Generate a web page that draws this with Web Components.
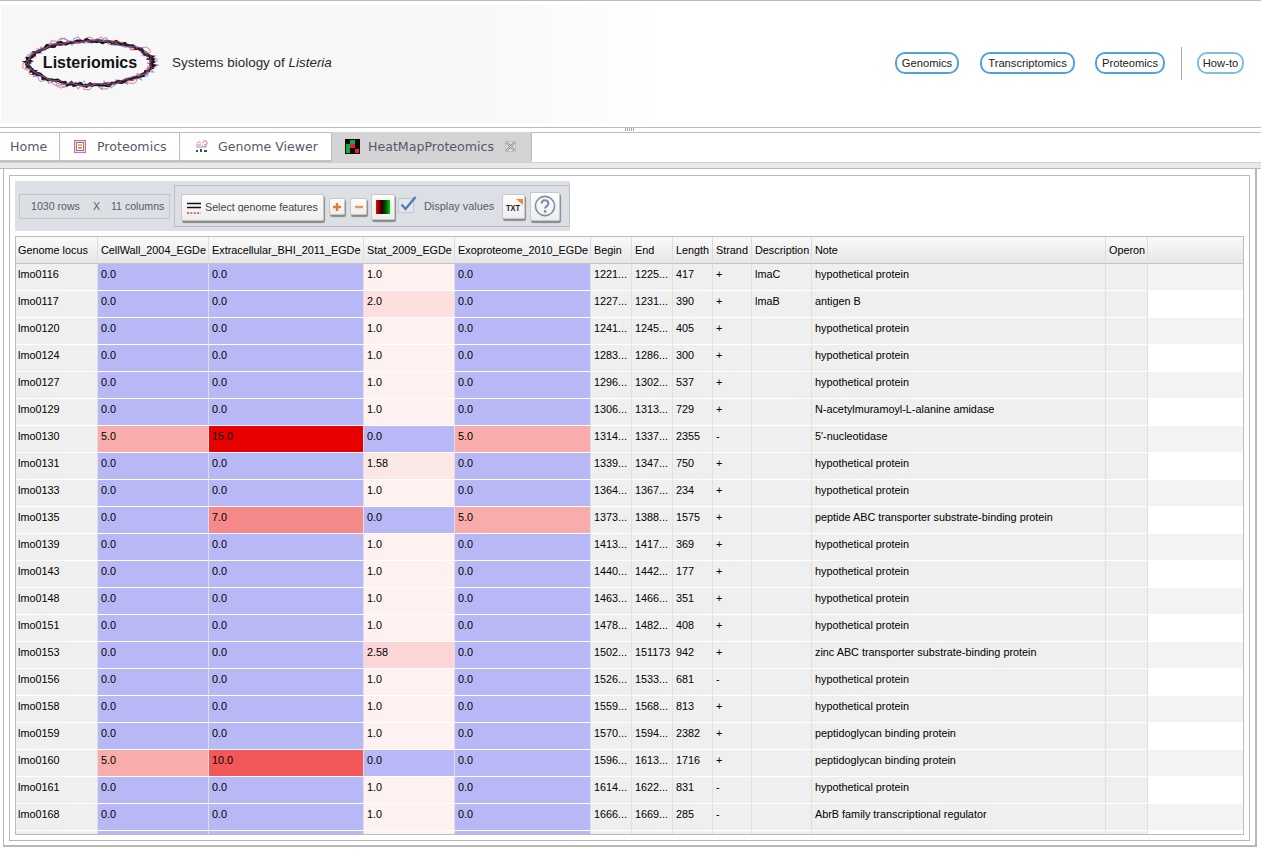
<!DOCTYPE html>
<html>
<head>
<meta charset="utf-8">
<title>Listeriomics</title>
<style>
  html, body { margin: 0; height: 851px; overflow: hidden; background: #fff; }
  body { font-family: "Liberation Sans", Arial, sans-serif; }
</style>
</head>
<body>
<listeria-app></listeria-app>

<script>
// ring of the logo, jittered lines so it looks hand drawn
function ringPath(cx, cy, rx, ry, jitter, step, seed) {
  let s = seed;
  const rnd = () => {
    s = (s * 16807) % 2147483647;
    return s / 2147483647 - 0.5;
  };
  let d = "";
  for (let a = 0; a <= 360; a += step) {
    const t = a * Math.PI / 180;
    const j = rnd() * jitter;
    const x = cx + (rx + j) * Math.cos(t);
    const y = cy + (ry + j * 0.8) * Math.sin(t);
    d += (a === 0 ? "M" : "L") + x.toFixed(1) + " " + y.toFixed(1);
  }
  return d;
}

class ListeriaLogo extends HTMLElement {
  constructor() {
    super();
    this.attachShadow({ mode: "open" });
    this.shadowRoot.innerHTML = `
    <style>
      :host { display: grid; width: 146px; height: 60px; place-items: center; }
      svg, span { grid-area: 1 / 1; }
      svg { overflow: visible; }
      span { font: bold 16px "Liberation Sans", Arial, sans-serif; color: #111; padding-bottom: 1px; }
    </style>
    <svg width="146" height="60" viewBox="0 0 146 60" fill="none">
      <path d="${ringPath(73, 30, 63, 22.5, 11, 4, 91)}" stroke="#8b9ad6" stroke-width="1.1" opacity=".85"/>
      <path d="${ringPath(73, 30, 63, 23, 12, 5, 417)}" stroke="#ef5a68" stroke-width="1" opacity=".8"/>
      <path d="${ringPath(73, 30, 62, 22, 5, 3, 1203)}" stroke="#15151d" stroke-width="2.4"/>
      <path d="${ringPath(73, 30, 62, 22, 3, 4, 555)}" stroke="#20202a" stroke-width="1.8"/>
      <path d="${ringPath(73, 30, 62, 22, 5, 6, 733)}" stroke="#d8202f" stroke-width="1" opacity=".9"/>
      <path d="${ringPath(73, 30, 62, 22, 6, 9, 2891)}" stroke="#5a6cc8" stroke-width="1" opacity=".8"/>
    </svg>
    <span>Listeriomics</span>`;
  }
}
customElements.define("listeria-logo", ListeriaLogo);

class NavPill extends HTMLElement {
  constructor() {
    super();
    this.attachShadow({ mode: "open" });
    this.shadowRoot.innerHTML = `
    <style>
      :host {
        display: block;
        box-sizing: border-box;
        height: 22px;
        border: 2px solid #4fa5d5;
        border-radius: 10px;
        background: #fff;
        text-align: center;
        white-space: nowrap;
        font: 11.2px/18px "Liberation Sans", Arial, sans-serif;
        color: #222;
      }
      :host(.light) { border-color: #7dbde2; }
    </style>
    <slot></slot>`;
  }
}
customElements.define("nav-pill", NavPill);

class ListeriaHeader extends HTMLElement {
  constructor() {
    super();
    this.attachShadow({ mode: "open" });
    this.shadowRoot.innerHTML = `
    <style>
      :host {
        display: block;
        box-sizing: border-box;
        height: 132px;
        padding-top: 4px;
        border-top: 1px solid #bcbcbc;
      }
      .banner {
        height: 118px;
        margin-left: 1px;
        display: flex;
        align-items: center;
        box-sizing: border-box;
        padding: 0 17px 2px 16px;
        background: linear-gradient(90deg, #f7f7f7 0, #f8f8f8 38%, #fff 53%);
      }
      .tagline { margin: 0 0 2px 9px; font-size: 13.45px; color: #2a2a2a; }
      nav { margin-left: auto; display: flex; align-items: center; }
      .divider { width: 1px; height: 33px; background: #a9a9a9; margin: 0 15px 0 16px; }
      .rule {
        margin-top: 4px;
        height: 4px;
        border-top: 1px solid #bcbcbc;
        border-bottom: 1px solid #bcbcbc;
        display: flex;
        justify-content: center;
      }
      .grip {
        width: 9px;
        height: 3px;
        margin: 0 0 0 -2px;
        background: repeating-linear-gradient(90deg, #a8a8a8 0 1px, transparent 1px 2px);
      }
    </style>
    <div class="banner">
      <listeria-logo></listeria-logo>
      <p class="tagline">Systems biology of <i>Listeria</i></p>
      <nav>
        <nav-pill style="width:64px;margin-right:21px">Genomics</nav-pill>
        <nav-pill style="width:95px;margin-right:20px">Transcriptomics</nav-pill>
        <nav-pill style="width:70px">Proteomics</nav-pill>
        <span class="divider"></span>
        <nav-pill class="light" style="width:47px">How-to</nav-pill>
      </nav>
    </div>
    <div class="rule"><span class="grip"></span></div>`;
  }
}
customElements.define("listeria-header", ListeriaHeader);

class TabItem extends HTMLElement {
  constructor() {
    super();
    this.attachShadow({ mode: "open" });
    this.shadowRoot.innerHTML = `
    <style>
      :host {
        display: flex;
        align-items: center;
        box-sizing: border-box;
        height: 30px;
        padding-top: 1px;
        border-right: 1px solid #bdbdbd;
        border-bottom: 2px solid #c2c2c2;
        font: 12.6px "DejaVu Sans", Verdana, sans-serif;
        color: #545a68;
      }
      :host([active]) { background: #d4d4d4; border-bottom-color: #d4d4d4; }
      ::slotted(svg) { flex: none; margin-top: -1px; }
    </style>
    <slot></slot>`;
  }
}
customElements.define("tab-item", TabItem);

class TabBar extends HTMLElement {
  constructor() {
    super();
    this.attachShadow({ mode: "open" });
    this.shadowRoot.innerHTML = `
    <style>
      :host { display: block; }
      .tabs { display: flex; height: 30px; }
      .gap { flex: 1; }
      .band { height: 7px; box-sizing: border-box; border-bottom: 1px solid #b8b8b8; background: #e9e9e9; border-top: 1px solid #cfcfcf; }
    </style>
    <div class="tabs">
      <tab-item style="width:60px;padding-left:10px">Home</tab-item>
      <tab-item style="width:120px;padding-left:14px">
        <svg width="12" height="13" viewBox="0 0 12 13">
          <rect x=".6" y=".6" width="10.8" height="11.8" fill="#fff" stroke="#ee6a78" stroke-width="1.2"/>
          <rect x="2.5" y="2.5" width="7" height="8" fill="#fff" stroke="#6f78d8"/>
          <rect x="4" y="4" width="4" height="2" fill="#f3c33c"/>
          <rect x="4" y="7" width="4" height="2" fill="#f39a3c"/>
        </svg>
        <span style="margin-left:11px">Proteomics</span>
      </tab-item>
      <tab-item style="width:152px;padding-left:15px">
        <svg width="13" height="14" viewBox="0 0 13 14" fill="none">
          <path d="M1 6h5M2 4.5c1-2 3-2 4 0M7 6c1 2 3 2 4 0" stroke="#e8798a"/>
          <path d="M8 4c0-3 4-3 4 0s-2 2-3 1" stroke="#e0606e"/>
          <path d="M1 8h11" stroke="#7e9ed8"/>
          <path d="M1 13v-2h2v2zM5 13v-3h2v3zM9 13v-2h3v2z" fill="#4a4a4a"/>
        </svg>
        <span style="margin-left:10px">Genome Viewer</span>
      </tab-item>
      <tab-item active style="width:200px;padding-left:13px">
        <svg width="15" height="15" viewBox="0 0 15 15">
          <rect width="15" height="15" fill="#0a0a0a"/>
          <rect x="5" y="1" width="5" height="4" fill="#12a84a"/>
          <rect x="1" y="5" width="4" height="4" fill="#12a84a"/>
          <rect x="5" y="5" width="5" height="4" fill="#e4202c"/>
          <rect x="1" y="9" width="4" height="5" fill="#12a84a"/>
          <rect x="10" y="10" width="4" height="4" fill="#e4202c"/>
        </svg>
        <span style="margin-left:8px">HeatMapProteomics</span>
        <svg style="margin-left:10px" width="13" height="13" viewBox="0 0 13 13" fill="none">
          <rect x="1.5" y="1.5" width="10" height="10" fill="#dedede" stroke="#c0c0c0"/>
          <path d="M2.5 2.5l8 8M10.5 2.5l-8 8" stroke="#8f8f8f" stroke-width="2.2"/>
          <path d="M2.5 2.5l8 8M10.5 2.5l-8 8" stroke="#f2f2f2" stroke-width=".7"/>
        </svg>
      </tab-item>
      <div class="gap"></div>
    </div>
    <div class="band"></div>`;
  }
}
customElements.define("tab-bar", TabBar);

class ToolButton extends HTMLElement {
  constructor() {
    super();
    this.attachShadow({ mode: "open" });
    this.shadowRoot.innerHTML = `
    <style>
      :host {
        display: flex;
        align-items: center;
        justify-content: center;
        box-sizing: border-box;
        flex: none;
        background: linear-gradient(#fdfdfd, #eeeeee);
        border: 1px solid #c8c8c8;
        border-radius: 2px;
        box-shadow: 1px 2px 1px #8a8a8a;
      }
    </style>
    <slot></slot>`;
  }
}
customElements.define("tool-button", ToolButton);

class HeatToolbar extends HTMLElement {
  constructor() {
    super();
    this.attachShadow({ mode: "open" });
    this.shadowRoot.innerHTML = `
    <style>
      :host {
        display: flex;
        align-items: center;
        box-sizing: border-box;
        width: 555px;
        height: 50px;
        padding: 0 0 0 4px;
        background: #dcdfe3;
        font-family: "Liberation Sans", Arial, sans-serif;
        color: #555d6b;
      }
      .count {
        box-sizing: border-box;
        width: 151px;
        height: 25px;
        margin-right: 4px;
        padding-left: 11px;
        display: flex;
        align-items: center;
        border: 1px solid #c2c6ca;
        font-size: 10.6px;
      }
      .count b { font-weight: normal; margin: 0 11px 0 13px; }
      .group {
        box-sizing: border-box;
        width: 396px;
        height: 42px;
        padding-left: 6px;
        display: flex;
        align-items: center;
        border: 1px solid #bcc0c4;
        margin-right: -1px;
        flex: none;
      }
      .select { width: 143px; height: 27px; justify-content: flex-start; padding-left: 4px; margin-right: 5px; margin-top: 2px; }
      .select span { display: block; height: 11px; margin-left: 3px; margin-top: -1px; overflow: hidden; font-size: 10.7px; line-height: 13px; color: #444; }
      .plus { width: 16px; height: 17px; margin-right: 5px; margin-top: 1px; }
      .color { width: 24px; height: 26px; margin: 1px 3px 0 4px; }
      .ramp { width: 14px; height: 14px; background: linear-gradient(90deg, #f00 0, #300 40%, #030 60%, #0c0 100%); }
      .check { margin-right: 7px; margin-top: -3px; flex: none; }
      .label { font-size: 10.9px; width: 78px; flex: none; }
      .txt { width: 23px; height: 25px; margin-right: 5px; }
      .help { width: 30px; height: 29px; }
    </style>
    <div class="count"><span>1030 rows</span><b>X</b><span>11 columns</span></div>
    <div class="group">
      <tool-button class="select">
        <svg width="16" height="15" viewBox="0 0 16 15">
          <path d="M1 3.5h14M1 7.5h14" stroke="#111" stroke-width="1.6"/>
          <path d="M1 13h14" stroke="#e23b3b" stroke-width="1.6" stroke-dasharray="2 1.4"/>
        </svg>
        <span>Select genome features</span>
      </tool-button>
      <tool-button class="plus">
        <svg width="10" height="10" viewBox="0 0 10 10"><path d="M1 5h8M5 1v8" stroke="#e07d2c" stroke-width="2.4"/></svg>
      </tool-button>
      <tool-button class="plus" style="width:17px;margin-right:0">
        <svg width="10" height="10" viewBox="0 0 10 10"><path d="M1 5h8" stroke="#e8985a" stroke-width="2.4"/></svg>
      </tool-button>
      <tool-button class="color"><span class="ramp"></span></tool-button>
      <svg class="check" width="19" height="17" viewBox="0 0 19 17" fill="none">
        <rect x=".5" y="2.5" width="15" height="14" fill="#e3e6ea" stroke="#c4c7cb"/>
        <path d="M3.5 8.5l4 4.5 10-12" stroke="#4f7fb0" stroke-width="2.4"/>
      </svg>
      <span class="label">Display values</span>
      <tool-button class="txt">
        <svg width="20" height="20" viewBox="0 0 20 20">
          <path d="M12 3h7v6z" fill="#ef8a3c"/>
          <text x="2" y="15" font-family="Liberation Sans, Arial, sans-serif" font-size="8.5" font-weight="bold" fill="#222" textLength="14" lengthAdjust="spacingAndGlyphs">TXT</text>
        </svg>
      </tool-button>
      <tool-button class="help">
        <svg width="22" height="22" viewBox="0 0 22 22" fill="none">
          <circle cx="11" cy="11" r="9.6" stroke="#7f8ea8" stroke-width="1.6"/>
          <path d="M7.8 8.4c0-4.2 6.6-4.2 6.6 0 0 2.8-3.3 2.6-3.3 5.2" stroke="#7a89a5" stroke-width="2"/>
          <circle cx="11.1" cy="16.4" r="1.3" fill="#7a89a5"/>
        </svg>
      </tool-button>
    </div>`;
  }
}
customElements.define("heat-toolbar", HeatToolbar);

const COLUMNS = [
  ["Genome locus", 82], ["CellWall_2004_EGDe", 111], ["Extracellular_BHI_2011_EGDe", 155],
  ["Stat_2009_EGDe", 91], ["Exoproteome_2010_EGDe", 136], ["Begin", 41], ["End", 41],
  ["Length", 40], ["Strand", 39], ["Description", 60], ["Note", 294], ["Operon", 42], ["", 95]
];

const HP = "hypothetical protein";
const PG = "peptidoglycan binding protein";
const ROWS = [
  ["lmo0116", "0.0", "0.0", "1.0", "0.0", "1221...", "1225...", "417", "+", "lmaC", HP],
  ["lmo0117", "0.0", "0.0", "2.0", "0.0", "1227...", "1231...", "390", "+", "lmaB", "antigen B"],
  ["lmo0120", "0.0", "0.0", "1.0", "0.0", "1241...", "1245...", "405", "+", "", HP],
  ["lmo0124", "0.0", "0.0", "1.0", "0.0", "1283...", "1286...", "300", "+", "", HP],
  ["lmo0127", "0.0", "0.0", "1.0", "0.0", "1296...", "1302...", "537", "+", "", HP],
  ["lmo0129", "0.0", "0.0", "1.0", "0.0", "1306...", "1313...", "729", "+", "", "N-acetylmuramoyl-L-alanine amidase"],
  ["lmo0130", "5.0", "15.0", "0.0", "5.0", "1314...", "1337...", "2355", "-", "", "5'-nucleotidase"],
  ["lmo0131", "0.0", "0.0", "1.58", "0.0", "1339...", "1347...", "750", "+", "", HP],
  ["lmo0133", "0.0", "0.0", "1.0", "0.0", "1364...", "1367...", "234", "+", "", HP],
  ["lmo0135", "0.0", "7.0", "0.0", "5.0", "1373...", "1388...", "1575", "+", "", "peptide ABC transporter substrate-binding protein"],
  ["lmo0139", "0.0", "0.0", "1.0", "0.0", "1413...", "1417...", "369", "+", "", HP],
  ["lmo0143", "0.0", "0.0", "1.0", "0.0", "1440...", "1442...", "177", "+", "", HP],
  ["lmo0148", "0.0", "0.0", "1.0", "0.0", "1463...", "1466...", "351", "+", "", HP],
  ["lmo0151", "0.0", "0.0", "1.0", "0.0", "1478...", "1482...", "408", "+", "", HP],
  ["lmo0153", "0.0", "0.0", "2.58", "0.0", "1502...", "151173", "942", "+", "", "zinc ABC transporter substrate-binding protein"],
  ["lmo0156", "0.0", "0.0", "1.0", "0.0", "1526...", "1533...", "681", "-", "", HP],
  ["lmo0158", "0.0", "0.0", "1.0", "0.0", "1559...", "1568...", "813", "+", "", HP],
  ["lmo0159", "0.0", "0.0", "1.0", "0.0", "1570...", "1594...", "2382", "+", "", PG],
  ["lmo0160", "5.0", "10.0", "0.0", "0.0", "1596...", "1613...", "1716", "+", "", PG],
  ["lmo0161", "0.0", "0.0", "1.0", "0.0", "1614...", "1622...", "831", "-", "", HP],
  ["lmo0168", "0.0", "0.0", "1.0", "0.0", "1666...", "1669...", "285", "-", "", "AbrB family transcriptional regulator"],
  ["", "", "", "", "", "", "", "", "", "", ""]
];

const HEAT = {
  "0.0": "#b8b8f6", "1.0": "#fef2f0", "1.58": "#fbe8e5", "2.0": "#fddfdd", "2.58": "#fcd6d6",
  "5.0": "#f9acac", "7.0": "#f68a8a", "10.0": "#f35858", "15.0": "#e80000"
};

class HeatTable extends HTMLElement {
  constructor() {
    super();
    this.attachShadow({ mode: "open" });
    const head = COLUMNS.map(c => `<th>${c[0]}</th>`).join("");
    const cols = COLUMNS.map(c => `<col style="width:${c[1]}px">`).join("");
    const body = ROWS.map((r, i) => {
      const cells = [];
      for (let n = 0; n < 12; n++) {
        const v = r[n] === undefined ? "" : r[n];
        const isHeat = n >= 1 && n <= 4;
        const bg = isHeat ? HEAT[v === "" ? (n === 3 ? "1.0" : "0.0") : v] : "#efefef";
        cells.push(`<td style="background:${bg}">${v}</td>`);
      }
      return `<tr class="${i % 2 ? "even" : "odd"}">${cells.join("")}<td class="fill"></td></tr>`;
    }).join("");
    this.shadowRoot.innerHTML = `
    <style>
      :host {
        display: block;
        box-sizing: border-box;
        width: 1229px;
        height: 599px;
        overflow: hidden;
        border: 1px solid #bdbdbd;
        font: 10.83px "Liberation Sans", Arial, sans-serif;
        color: #000;
      }
      table { table-layout: fixed; border-collapse: separate; border-spacing: 0; width: 1227px; }
      th {
        height: 27px;
        padding: 0 0 0 3px;
        box-sizing: border-box;
        font-weight: normal;
        text-align: left;
        white-space: nowrap;
        overflow: hidden;
        background: linear-gradient(#fafafa, #e7e7e7);
        border-bottom: 1px solid #c4c4c4;
        border-right: 1px solid #dcdcdc;
      }
      th:first-child, td:first-child { padding-left: 2px; }
      th:last-child { border-right: 0; }
      td {
        height: 27px;
        box-sizing: border-box;
        padding: 0 0 7px 3px;
        white-space: nowrap;
        overflow: hidden;
        border-bottom: 1px solid #fff;
        border-right: 1px solid #e0e0e0;
      }
      td.fill { border-right: 0; border-bottom: 0; background: #fff; }
      tr.odd td.fill { background: #f3f3f3; border-bottom: 1px solid #fff; }
    </style>
    <table>
      <colgroup>${cols}</colgroup>
      <thead><tr>${head}</tr></thead>
      <tbody>${body}</tbody>
    </table>`;
  }
}
customElements.define("heat-table", HeatTable);

class HeatPanel extends HTMLElement {
  constructor() {
    super();
    this.attachShadow({ mode: "open" });
    this.shadowRoot.innerHTML = `
    <style>
      :host {
        display: block;
        box-sizing: border-box;
        width: 1254px;
        height: 678px;
        margin-left: 3px;
        padding: 6px 5px 5px;
        border: solid #b8b8b8;
        border-width: 0 2px 2px 1px;
      }
      .inner {
        box-sizing: border-box;
        width: 1241px;
        height: 666px;
        padding: 5px;
        border: 1px solid #b8b8b8;
      }
    </style>
    <div class="inner">
      <slot></slot>
    </div>`;
  }
}
customElements.define("heat-panel", HeatPanel);

class ListeriaApp extends HTMLElement {
  constructor() {
    super();
    this.attachShadow({ mode: "open" });
    this.shadowRoot.innerHTML = `
    <style>
      :host { display: block; width: 1261px; height: 851px; overflow: hidden; }
      heat-table { margin-top: 5px; }
    </style>
    <listeria-header></listeria-header>
    <tab-bar></tab-bar>
    <heat-panel>
      <heat-toolbar></heat-toolbar>
      <heat-table></heat-table>
    </heat-panel>`;
  }
}
customElements.define("listeria-app", ListeriaApp);
</script>
</body>
</html>
